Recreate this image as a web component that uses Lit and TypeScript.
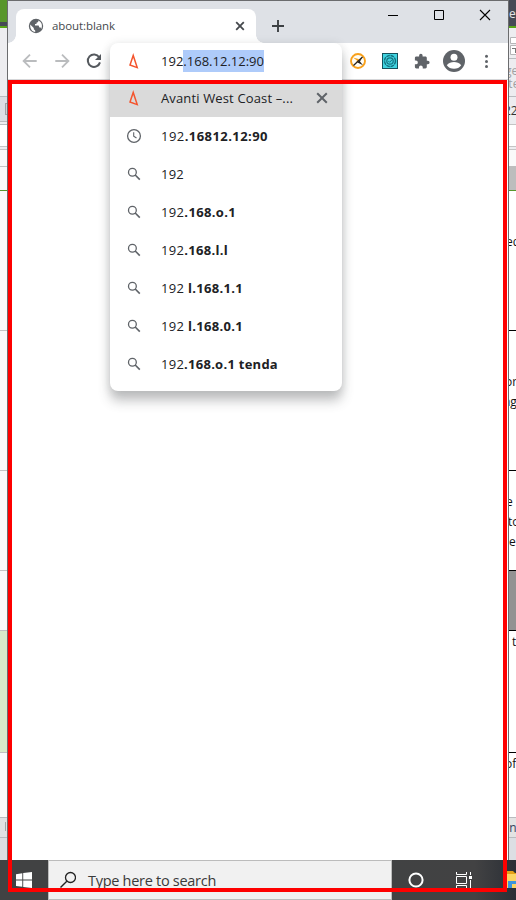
import { LitElement, html, svg, css } from "lit";
import { customElement } from "lit/decorators.js";

type Band = { h: number; bg: string; line?: string };

const LEFT_BANDS: Band[] = [
  { h: 22, bg: "#58962b" },
  { h: 4, bg: "#464a55" },
  { h: 2, bg: "#58a618" },
  { h: 69, bg: "#ededf0", line: "#b9bbbf" },
  { h: 25, bg: "#dcdee3", line: "#b9bbbf" },
  { h: 3, bg: "#ededf0", line: "#b9bbbf" },
  { h: 22, bg: "#ffffff", line: "#c4c4c4" },
  { h: 3, bg: "#ededf0", line: "#c4c4c4" },
  { h: 17, bg: "#fafafa", line: "#c4c4c4" },
  { h: 24, bg: "#fafafa", line: "#58962b" },
  { h: 140, bg: "#fafafa", line: "#c4c4c4" },
  { h: 140, bg: "#fafafa", line: "#c4c4c4" },
  { h: 100, bg: "#fafafa", line: "#c4c4c4" },
  { h: 60, bg: "#fafafa", line: "#c0c0c0" },
  { h: 122, bg: "#d8ebc8", line: "#c0c0c0" },
  { h: 65, bg: "#fafafa", line: "#b9bbbf" },
  { h: 20, bg: "#e0e1e4", line: "#b9bbbf" },
  { h: 22, bg: "#dcdee3" },
];

const RIGHT_BANDS: Band[] = [
  { h: 26, bg: "#464a55" },
  { h: 2, bg: "#58a618" },
  { h: 31, bg: "#ededf0", line: "#b9bbbf" },
  { h: 38, bg: "#ededf0", line: "#b9bbbf" },
  { h: 28, bg: "#ededf0", line: "#c4c4c4" },
  { h: 22, bg: "#ffffff", line: "#c4c4c4" },
  { h: 3, bg: "#ededf0", line: "#c4c4c4" },
  { h: 16, bg: "#fafafa" },
  { h: 25, bg: "#bdbdbd", line: "#58962b" },
  { h: 140, bg: "#ffffff", line: "#000000" },
  { h: 140, bg: "#ffffff", line: "#000000" },
  { h: 100, bg: "#ffffff", line: "#000000" },
  { h: 60, bg: "#929292", line: "#000000" },
  { h: 122, bg: "#ffffff", line: "#000000" },
  { h: 65, bg: "#ffffff", line: "#b9bbbf" },
  { h: 20, bg: "#e3e3e3", line: "#b9bbbf" },
  { h: 22, bg: "#dcdee3" },
];

const SCRAPS = [
  { t: "e", y: 14, x: 0, c: "#e4e4e6" },
  { t: "ge", y: 71, x: -4, c: "#a0a0a2" },
  { t: "ute", y: 84, x: -8, c: "#a0a0a2" },
  { t: "22", y: 111, x: -5, c: "#333333" },
  { t: "ed", y: 242, x: -3, c: "#111111" },
  { t: "or", y: 382, x: -4, c: "#111111" },
  { t: "ng", y: 402, x: -6, c: "#111111" },
  { t: "e", y: 502, x: -3, c: "#111111" },
  { t: "to", y: 522, x: -1, c: "#111111" },
  { t: "e", y: 542, x: 0, c: "#111111" },
  { t: "t", y: 642, x: 3, c: "#111111" },
  { t: "of", y: 764, x: -4, c: "#111111" },
  { t: "on", y: 828, x: -7, c: "#33405c" },
];

const SUGGESTIONS = [
  { icon: "clock", a: "192", b: ".16812.12:90", w: 107 },
  { icon: "search", a: "192", b: "", w: 23 },
  { icon: "search", a: "192", b: ".168.o.1", w: 75 },
  { icon: "search", a: "192", b: ".168.l.l", w: 67 },
  { icon: "search", a: "192 ", b: "l.168.1.1", w: 82 },
  { icon: "search", a: "192 ", b: "l.168.0.1", w: 82 },
  { icon: "search", a: "192", b: ".168.o.1 tenda", w: 117 },
];

const avanti = html`<svg width="24" height="24" viewBox="0 0 24 24">
  <path d="M11.200 6.400L8 16L15.200 18.600Z" fill="none" stroke="#f4552e" stroke-width="1.500" stroke-miterlimit="8"/>
</svg>`;

const icons: Record<string, unknown> = {
  clock: svg`<circle cx="12" cy="12" r="6.400" fill="none" stroke="#5f6368" stroke-width="1.300"/><path d="M11.700 8.200V12.200L14.500 14" fill="none" stroke="#5f6368" stroke-width="1.100"/>`,
  search: svg`<circle cx="10.400" cy="10.200" r="3.900" fill="none" stroke="#5f6368" stroke-width="1.300"/><path d="M13.200 13L17.800 17.600" stroke="#5f6368" stroke-width="1.600"/>`,
};

@customElement("app-root")
export class AppRoot extends LitElement {
  static styles = css`
    :host {
      display: block;
      position: relative;
      width: 516px;
      height: 900px;
      overflow: hidden;
      font-family: "Open Sans", "Noto Sans", sans-serif;
      font-size: 13px;
      color: #202124;
    }
    * { box-sizing: border-box; }
    svg { display: block; flex: none; }
    .desk { display: grid; grid-template-columns: 7px 502px 7px; height: 860px; }
    .strip { position: relative; overflow: hidden; }
    .band { border-bottom: 0 solid; }
    .lined { border-bottom-width: 1px; }
    .scrap { position: absolute; line-height: 12px; font-size: 12px; white-space: nowrap; }
    .glyph { position: absolute; left: 5px; top: 103px; width: 8px; height: 12px; border: 1px solid #9fa1a5; background: #d0d1d4; }
    .tick { position: absolute; left: 5px; top: 822px; width: 1px; height: 9px; background: #a2a4a8; }
    .tool { position: absolute; left: 1px; top: 37px; }
    .window {
      border: 1px solid #6b6c6e;
      border-bottom: 0;
      background: #fff;
      display: flex;
      flex-direction: column;
    }
    .titlebar { height: 42px; background: #dee1e6; display: flex; padding-left: 8px; }
    .tab {
      width: 240px; height: 34px; margin-top: 8px; background: #fff; border-radius: 8px 8px 0 0;
      display: flex; align-items: center; padding: 0 9px 0 12px; position: relative;
    }
    .flare { position: absolute; bottom: 0; width: 8px; height: 8px; }
    .fl { left: -8px; background: radial-gradient(circle at 0 0, #dee1e6 7.5px, #fff 8px); }
    .fr { right: -8px; background: radial-gradient(circle at 100% 0, #dee1e6 7.5px, #fff 8px); }
    .tabname { flex: 1; margin-left: 8px; font-size: 11.5px; line-height: 16px; color: #45494d; }
    .plus { margin: 17px 0 0 14px; }
    .controls { display: flex; margin: 0 0 0 auto; }
    .ctl { width: 46px; height: 28px; display: flex; align-items: center; justify-content: center; }
    .toolbar { height: 37px; border-bottom: 1px solid #d5d6d8; display: flex; align-items: center; position: relative; }
    .nav { display: flex; gap: 8px; padding: 0 0 1px 10px; }
    .exts { display: flex; gap: 8px; margin: 0 10px 1px auto; align-items: center; }
    .popup {
      position: absolute; left: 102px; top: 0; width: 232px; height: 348px;
      background: #fff; border-radius: 8px;
      box-shadow: 0 10px 12px rgba(60, 64, 67, 0.3), 0 1px 10px rgba(60, 64, 67, 0.14);
      overflow: hidden;
    }
    .row { height: 38px; display: flex; align-items: center; padding-left: 12px; }
    .row.url { height: 36px; }
    .row.on { background: linear-gradient(#fff 1px, #dadada 1px); padding-right: 10px; }
    .txt { margin-left: 15px; white-space: pre; }
    .txt.grow { flex: 1; }
    b { font-weight: 700; }
    .sel { background: #aecbfa; display: inline-block; height: 22px; line-height: 22px; }
    .taskbar {
      height: 40px; display: flex;
      background: linear-gradient(90deg, #414243 75%, #424243 92%, #2b2f36);
    }
    .start { width: 48px; display: flex; align-items: center; padding-left: 16px; }
    .search {
      width: 344px; background: #f1f1f1; border: 1px solid #bcbcbc; display: flex; align-items: center; padding-left: 9px;
    }
    .hint { margin-left: 12px; font-size: 14.5px; color: #3a3a3a; }
    .tray { flex: 1; display: flex; align-items: center; padding-left: 16px; }
    .views { margin-left: 31px; }
    .folder { margin-left: auto; }
    .frame { position: absolute; left: 8px; top: 80px; width: 499px; height: 812px; border: 4px solid #fe0000; }
  `;

  private bands(list: Band[]) {
    return list.map(
      (b) => html`<div class="band ${b.line ? "lined" : ""}" style="height:${b.h}px;background-color:${b.bg};border-color:${b.line ?? b.bg}"></div>`
    );
  }

  private fitted(content: unknown, w: number) {
    return html`<span class="txt" data-w=${w}>${content}</span>`;
  }

  /* Tightens or loosens tracking so each label keeps its design width. */
  firstUpdated() {
    this.renderRoot.querySelectorAll<HTMLElement>("[data-w]").forEach((el) => {
      const range = document.createRange();
      range.selectNodeContents(el);
      const now = range.getBoundingClientRect().width;
      const count = (el.textContent ?? "").length;
      el.style.letterSpacing = `${(Number(el.dataset.w) - now) / count}px`;
    });
  }

  render() {
    return html`
      <div class="desk">
        <div class="strip">${this.bands(LEFT_BANDS)}<i class="glyph"></i><i class="tick"></i></div>
        <div class="window">
          <div class="titlebar">
            <div class="tab">
              <i class="flare fl"></i>
              <svg width="16" height="16" viewBox="0 0 16 16">
                <circle cx="8" cy="8" r="7.200" fill="#5f6368"/>
                <path d="M2.200 6.600L5.800 10.100V11.200L7.200 12.600V14C4.200 13.800 1.900 11.200 2.200 6.600ZM10.400 2.600C10.500 4 9.700 4.700 8.500 4.700V6H7V7.500H10.600L11.400 9.500H12.700L13.200 11C14.800 8 13.800 4 10.400 2.600Z" fill="#fff"/>
              </svg>
              <span class="tabname"><span data-w="63">about:blank</span></span>
              <svg width="14" height="14" viewBox="0 0 14 14"><path d="M3.200 3.200L10.800 10.800M10.800 3.200L3.200 10.800" stroke="#45494d" stroke-width="1.800"/></svg>
              <i class="flare fr"></i>
            </div>
            <svg class="plus" width="16" height="16" viewBox="0 0 16 16"><path d="M8 2V14M2 8H14" stroke="#3c4043" stroke-width="1.900"/></svg>
            <div class="controls">
              <div class="ctl"><svg width="12" height="12" viewBox="0 0 12 12"><path d="M1 6.500H11" stroke="#000"/></svg></div>
              <div class="ctl"><svg width="12" height="12" viewBox="0 0 12 12"><path d="M1.500 1.500H10.500V10.500H1.500Z" fill="none" stroke="#000"/></svg></div>
              <div class="ctl"><svg width="12" height="12" viewBox="0 0 12 12"><path d="M1 1L11 11M11 1L1 11" stroke="#000" stroke-width="1.100"/></svg></div>
            </div>
          </div>
          <div class="toolbar">
            <div class="nav">
              <svg width="24" height="24" viewBox="0 0 24 24"><path d="M18.700 12H6M12 5.600L5.600 12L12 18.400" fill="none" stroke="#babcbe" stroke-width="1.800"/></svg>
              <svg width="24" height="24" viewBox="0 0 24 24"><path d="M5.300 12H18M12 5.600L18.400 12L12 18.400" fill="none" stroke="#babcbe" stroke-width="1.800"/></svg>
              <svg width="24" height="24" viewBox="0 0 24 24"><path d="M17.200 8.200A6.200 6.200 0 1 0 18 13.400" fill="none" stroke="#55595e" stroke-width="2"/><path d="M19 5V11H13Z" fill="#55595e"/></svg>
            </div>
            <div class="exts">
              <svg width="24" height="24" viewBox="0 0 24 24">
                <circle cx="12" cy="12" r="7" fill="#fffdf5" stroke="#f9a11b" stroke-width="1.900"/>
                <path d="M7 8.500L12.500 10L13.500 12L10 14.500L11 11.500Z" fill="#f9a11b"/><path d="M16.800 7.500L14 12.500L17 16.300L11.500 13.500Z" fill="#222"/><path d="M7.500 16.500L16.500 8" stroke="#222" stroke-width="1.200"/>
              </svg>
              <svg width="24" height="24" viewBox="0 0 24 24">
                <rect x="4.500" y="4.500" width="15" height="15" fill="#3fd3e0" stroke="#15515c"/>
                <g fill="none" stroke="#14717f"><circle cx="12" cy="12" r="5.500" stroke-width="1.400" stroke-dasharray="3.600 .7"/><circle cx="12" cy="12" r="3.200" stroke-width="1.200"/><path d="M10.300 12L11.600 13.300L14 10.800"/></g>
              </svg>
              <svg width="24" height="24" viewBox="0 0 24 24"><path transform="translate(3.500 4) scale(.7)" d="M20.500 11H19V7c0-1.100-.9-2-2-2h-4V3.500a2.500 2.500 0 0 0-5 0V5H4c-1.100 0-2 .9-2 2v3.800h1.500a2.700 2.700 0 0 1 0 5.400H2V20c0 1.100.9 2 2 2h3.800v-1.500a2.700 2.700 0 0 1 5.400 0V22H17c1.100 0 2-.9 2-2v-4h1.500a2.500 2.500 0 0 0 0-5Z" fill="#5f6368"/></svg>
              <svg width="24" height="24" viewBox="0 0 24 24"><circle cx="12" cy="12" r="11" fill="#5f6368"/><circle cx="12" cy="8.300" r="3.500" fill="#fff"/><path d="M4.800 16.300C6.300 13.600 9.500 13 12 13S17.700 13.600 19.200 16.300C17.600 18.700 15 19.800 12 19.800S6.400 18.700 4.800 16.300Z" fill="#fff"/></svg>
              <svg width="24" height="24" viewBox="0 0 24 24"><g fill="#5f6368"><circle cx="12.500" cy="7.200" r="1.500"/><circle cx="12.500" cy="12.400" r="1.500"/><circle cx="12.500" cy="17.600" r="1.500"/></g></svg>
            </div>
            <div class="popup">
              <div class="row url">${avanti}${this.fitted(html`192<span class="sel">.168.12.12:90</span>`, 103)}</div>
              <div class="row on">
                ${avanti}<span class="txt grow" data-w="132">Avanti West Coast –...</span>
                <svg width="20" height="20" viewBox="0 0 20 20"><path d="M5.200 5.200L14.800 14.800M14.800 5.200L5.200 14.800" stroke="#5f6368" stroke-width="2"/></svg>
              </div>
              ${SUGGESTIONS.map(
                (s) => html`<div class="row"><svg width="24" height="24" viewBox="0 0 24 24">${icons[s.icon]}</svg>${this.fitted(html`${s.a}<b>${s.b}</b>`, s.w)}</div>`
              )}
            </div>
          </div>
        </div>
        <div class="strip">
          ${this.bands(RIGHT_BANDS)}
          <svg class="tool" width="8" height="18" viewBox="0 0 8 18"><path d="M8 .5H.5V6.500H8M8 8.500H.5V17.500H8" fill="#fff" stroke="#b5b5b7"/><path d="M2 11.500H8M5.500 11.500V16" stroke="#777" fill="none"/></svg>
          ${SCRAPS.map((s) => html`<span class="scrap" style="left:${s.x}px;top:${s.y - 6}px;color:${s.c}">${s.t}</span>`)}
        </div>
      </div>
      <div class="taskbar">
        <div class="start"><svg width="16" height="16" viewBox="0 0 16 16"><path d="M0 2.200L6.300 1.200V7.500H0ZM7.200 1.100L16 0V7.500H7.200ZM0 8.500H6.300V14.800L0 13.900ZM7.200 8.500H16V16L7.200 15Z" fill="#fff"/></svg></div>
        <div class="search">
          <svg width="18" height="20" viewBox="0 0 18 20"><circle cx="12.500" cy="7.500" r="5" fill="none" stroke="#222" stroke-width="1.300"/><path d="M8.800 11.200L2.500 17.500" stroke="#222" stroke-width="1.400"/></svg>
          <span class="hint" data-w="128">Type here to search</span>
        </div>
        <div class="tray">
          <svg width="16" height="16" viewBox="0 0 16 16"><circle cx="8" cy="8" r="6.600" fill="none" stroke="#fff" stroke-width="2"/></svg>
          <svg class="views" width="18" height="18" viewBox="0 0 18 18"><path d="M1.500 1V3.500H11.500V1M1.500 17V14.500H11.500V17M1.500 5.500H11.500V12.500H1.500ZM15.500 1V4M15.500 9V17" fill="none" stroke="#fff"/><rect x="14" y="5" width="3" height="3" fill="#fff"/></svg>
          <svg class="folder" width="10" height="20" viewBox="0 0 10 20"><path d="M0 1H7L9 3H10V18H0Z" fill="#e5a117"/><path d="M0 4H10V18H0Z" fill="#fcd462"/><path d="M2 11H10V14H6V18H2Z" fill="#3c94dc"/></svg>
        </div>
      </div>
      <div class="frame"></div>
    `;
  }
}
